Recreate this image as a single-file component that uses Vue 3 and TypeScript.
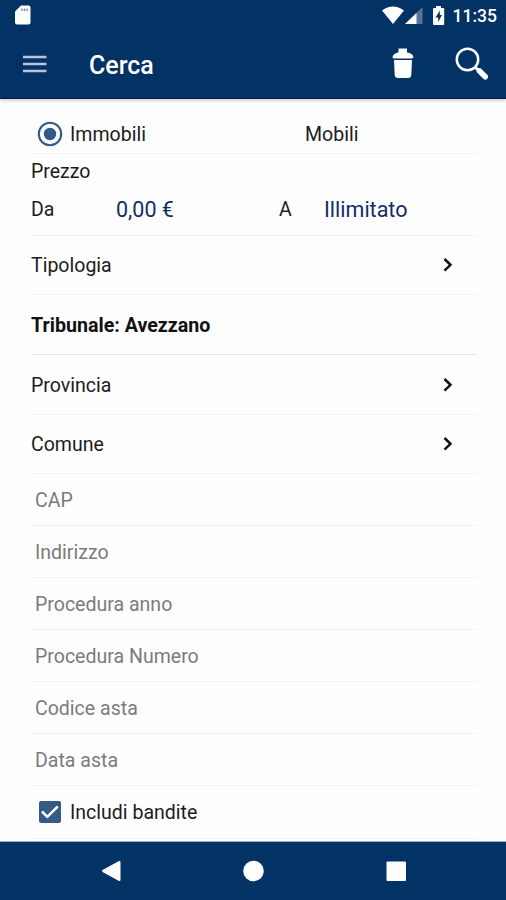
<script setup lang="ts">
import { ref } from 'vue'

interface PickerRow {
  label: string
  bold?: boolean
  height: number
}

const kind = ref<'immobili' | 'mobili'>('immobili')
const includeSold = ref(true)

const pickers: PickerRow[] = [
  { label: 'Tipologia', height: 59 },
  { label: 'Tribunale: Avezzano', bold: true, height: 60 },
  { label: 'Provincia', height: 60 },
  { label: 'Comune', height: 59 },
]

const fields = ['CAP', 'Indirizzo', 'Procedura anno', 'Procedura Numero', 'Codice asta', 'Data asta']
</script>

<template>
  <div class="screen">
    <header class="top">
      <div class="status">
        <svg width="16" height="20" viewBox="0 0 16 20">
          <path d="M6 0.500H13.500Q15.500 0.500 15.500 2.500V17.500Q15.500 19.500 13.500 19.500H2Q0 19.500 0 17.500V6.500Z" fill="#fff" />
          <path d="M7 3.500v2.500M9.500 3.500v2.500M12 3.500v2.500" stroke="#7d8aaa" stroke-width="1.400" />
        </svg>
        <div class="status-right">
          <svg width="64" height="20" viewBox="0 0 64 20">
            <path d="M0 4.500Q11 -3.500 22 4.500L11 18Z" fill="#fff" />
            <path d="M40.500 1V18H23Z" fill="#577499" />
            <path d="M34.500 7V18H23Z" fill="#fff" />
            <path d="M54 0H59V2H61.200Q62.200 2 62.200 3V18Q62.200 19 61.200 19H52Q51 19 51 18V3Q51 2 52 2H54Z" fill="#fff" />
            <path d="M57.800 4.500L53.500 11.400H56.200V16L60 9H57.800Z" fill="#033265" />
          </svg>
          <span class="time">11:35</span>
        </div>
      </div>
      <div class="toolbar">
        <svg class="menu" width="24" height="18" viewBox="0 0 24 18">
          <path d="M0 2H23.500M0 9H23.500M0 16H23.500" stroke="#b7c3d8" stroke-width="2.500" />
        </svg>
        <h1>Cerca</h1>
        <svg class="trash" width="22" height="31" viewBox="0 0 22 31">
          <path d="M6.500 0.500H15V4.500Q20.500 5 21.500 9Q21 10.500 19 10.500H2.500Q0.500 10.500 0.500 9Q1.500 5 6.500 4.500Z" fill="#fff" />
          <path d="M2 12H20L19.300 27Q19 30 16 30H6Q3 30 2.700 27Z" fill="#fff" />
        </svg>
        <svg class="search" width="34" height="34" viewBox="0 0 34 34">
          <circle cx="12.500" cy="12.500" r="10.700" fill="none" stroke="#fff" stroke-width="2.500" />
          <path d="M20 20L24 24" stroke="#fff" stroke-width="3" />
          <path d="M24.500 24L30.300 29.800" stroke="#fff" stroke-width="5.500" stroke-linecap="round" />
        </svg>
      </div>
    </header>

    <main class="form">
      <div class="row kinds">
        <button class="choice" @click="kind = 'immobili'">
          <svg width="26" height="26" viewBox="0 0 26 26">
            <circle cx="13" cy="13" r="11.200" fill="none" stroke="#315a88" stroke-width="2.100" />
            <circle v-if="kind === 'immobili'" cx="13" cy="13" r="6.200" fill="#315a88" />
          </svg>
          <span>Immobili</span>
        </button>
        <button class="choice second" @click="kind = 'mobili'"><span>Mobili</span></button>
      </div>
      <div class="row price">
        <div class="price-title">Prezzo</div>
        <div class="range">
          <span>Da</span>
          <span class="value">0,00 €</span>
          <span>A</span>
          <span class="value">Illimitato</span>
        </div>
      </div>
      <div
        v-for="p in pickers"
        :key="p.label"
        class="row picker"
        :class="{ bold: p.bold }"
        :style="{ height: p.height + 'px' }"
      >
        <span>{{ p.label }}</span>
        <svg v-if="!p.bold" width="12" height="16" viewBox="0 0 12 16">
          <path d="M2.500 2L8.500 7.800L2.500 13.600" fill="none" stroke="#111" stroke-width="2.500" />
        </svg>
      </div>
      <div v-for="f in fields" :key="f" class="row field">
        <span>{{ f }}</span>
      </div>
      <div class="row include" @click="includeSold = !includeSold">
        <svg width="24" height="24" viewBox="0 0 24 24">
          <rect x="1" y="1" width="22" height="22" rx="2" fill="#355c87" />
          <path v-if="includeSold" d="M4 11.500L9.300 16.800L19.700 6.500" fill="none" stroke="#fff" stroke-width="2.500" />
        </svg>
        <span>Includi bandite</span>
      </div>
    </main>

    <nav class="nav">
      <svg width="506" height="58" viewBox="0 0 506 58">
        <path d="M119.500 20V38L103 29Z" fill="#fff" stroke="#fff" stroke-width="2" stroke-linejoin="round" />
        <circle cx="253.500" cy="29" r="10.300" fill="#fff" />
        <rect x="386.500" y="19.500" width="19.500" height="19.500" rx="1" fill="#fff" />
      </svg>
    </nav>
  </div>
</template>

<style>
body {
  margin: 0;
  background: #fefefe;
}
</style>

<style scoped>
.screen {
  display: flex;
  flex-direction: column;
  width: 506px;
  height: 900px;
  overflow: hidden;
  font-family: Roboto, 'Liberation Sans', sans-serif;
  font-size: 19.550px;
  color: #1c1c1c;
  background: #fefefe;
}
.top {
  flex: none;
  height: 99px;
  box-sizing: border-box;
  background: #033265;
  border-bottom: 1px solid #0a1555;
  box-shadow: 0 2px 3px #d2d4d6;
}
.status {
  display: flex;
  justify-content: space-between;
  height: 31px;
  padding: 5px 9px 0 15px;
  box-sizing: border-box;
}
.status-right {
  display: flex;
  gap: 7px;
  padding-top: 1px;
}
.time {
  font-size: 17.500px;
  font-weight: 500;
  line-height: 20px;
  color: #fff;
}
.toolbar {
  display: flex;
  align-items: center;
  height: 67px;
  padding: 0 17px 0 23px;
}
.menu {
  margin-bottom: 2px;
}
h1 {
  flex: 1;
  margin: 1px 0 0 42px;
  font-size: 25px;
  font-weight: 500;
  color: #fff;
}
.trash {
  margin-bottom: 2px;
}
.search {
  margin: 0 0 1px 41px;
}
.form {
  flex: 1;
  padding: 15px 29px 0 31px;
}
.row {
  display: flex;
  align-items: center;
  box-sizing: border-box;
  border-bottom: 1px solid #f1f1f1;
  white-space: nowrap;
}
.row > span,
.choice > span {
  padding-top: 1px;
}
.kinds {
  height: 40px;
}
.choice {
  display: flex;
  flex: none;
  align-items: center;
  gap: 7px;
  width: 240px;
  box-sizing: border-box;
  padding: 0 0 0 6px;
  border: 0;
  background: none;
  font: inherit;
  color: inherit;
}
.choice.second {
  width: 206px;
  padding-left: 34px;
}
.price {
  flex-direction: column;
  align-items: stretch;
  height: 82px;
}
.price-title {
  height: 34px;
  line-height: 35px;
}
.range {
  display: grid;
  grid-template-columns: 85px 163px 45px 1fr;
  align-items: center;
  height: 43px;
}
.value {
  font-size: 21.500px;
  color: #132c68;
}
.picker {
  justify-content: space-between;
  padding-right: 23px;
}
.bold {
  font-size: 19.650px;
  font-weight: 700;
  color: #111;
  border-bottom-color: #e6e6e6;
}
.field {
  height: 52px;
  padding-left: 4px;
  color: #7b7b7b;
}
.include {
  gap: 8px;
  height: 53px;
  padding-left: 7px;
}
.nav {
  flex: none;
  height: 58px;
  background: #033265;
  box-shadow: 0 -1px 0 #a3a9c4;
}
.nav svg {
  display: block;
}
</style>
